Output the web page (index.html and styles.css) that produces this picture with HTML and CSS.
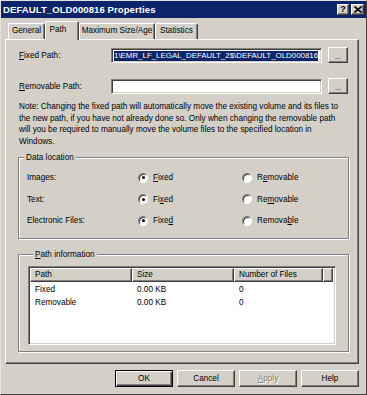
FILE: index.html
```html
<!DOCTYPE html>
<html>
<head>
<meta charset="utf-8">
<title>DEFAULT_OLD000816 Properties</title>
<link rel="stylesheet" href="styles.css">
</head>
<body>
<div class="window">
  <div class="titlebar">
    <span class="title">DEFAULT_OLD000816 Properties</span>
    <div class="tbtns">
      <span class="tbtn help">?</span>
      <span class="tbtn close"><svg width="8" height="7" viewBox="0 0 8 7"><path d="M0.5 0.5 L7.5 6.5 M7.5 0.5 L0.5 6.5" stroke="#000" stroke-width="1.6" fill="none"/></svg></span>
    </div>
  </div>
  <div class="client">
    <div class="tabs">
      <div class="tab t-general">General</div>
      <div class="tab t-path active">Path</div>
      <div class="tab t-max">Maximum Size/Age</div>
      <div class="tab t-stats">Statistics</div>
    </div>
    <div class="panel">
      <div class="pathrow">
        <span class="plabel"><u>F</u>ixed Path:</span>
        <div class="field"><span class="sel">1\EMR_LF_LEGAL_DEFAULT_2$\DEFAULT_OLD000816</span></div>
        <div class="btn dots">...</div>
      </div>
      <div class="pathrow second">
        <span class="plabel"><u>R</u>emovable Path:</span>
        <div class="field"></div>
        <div class="btn dots">...</div>
      </div>
      <p class="note">Note: Changing the fixed path will automatically move the existing volume and its files to<br>the new path, if you have not already done so. Only when changing the removable path<br>will you be required to manually move the volume files to the specified location in<br>Windows.</p>
      <fieldset class="group data">
        <legend>Data location</legend>
        <div class="drow">
          <span class="dlabel">Images:</span>
          <span class="radio"><i class="rb on"></i><span><u>F</u>ixed</span></span>
          <span class="radio"><i class="rb"></i><span>R<u>e</u>movable</span></span>
        </div>
        <div class="drow">
          <span class="dlabel">Text:</span>
          <span class="radio"><i class="rb on"></i><span>Fi<u>x</u>ed</span></span>
          <span class="radio"><i class="rb"></i><span>Re<u>m</u>ovable</span></span>
        </div>
        <div class="drow">
          <span class="dlabel">Electronic Files:</span>
          <span class="radio"><i class="rb on"></i><span>Fixe<u>d</u></span></span>
          <span class="radio"><i class="rb"></i><span>Remova<u>b</u>le</span></span>
        </div>
      </fieldset>
      <fieldset class="group info">
        <legend><u>P</u>ath information</legend>
        <div class="listview">
          <div class="lvhead">
            <span class="hcol c1">Path</span>
            <span class="hcol c2">Size</span>
            <span class="hcol c3">Number of Files</span>
            <span class="hcol c4"></span>
          </div>
          <div class="lvrow"><span class="c1">Fixed</span><span class="c2">0.00 KB</span><span class="c3">0</span></div>
          <div class="lvrow"><span class="c1">Removable</span><span class="c2">0.00 KB</span><span class="c3">0</span></div>
        </div>
      </fieldset>
    </div>
    <div class="buttons">
      <div class="btn push default">OK</div>
      <div class="btn push">Cancel</div>
      <div class="btn push disabled"><u>A</u>pply</div>
      <div class="btn push">Help</div>
    </div>
  </div>
</div>
</body>
</html>
```

FILE: styles.css
```css
* { box-sizing: border-box; }
html, body { margin: 0; padding: 0; }
body {
  width: 367px;
  height: 395px;
  overflow: hidden;
  background: #d4d0c8;
  font-family: "Liberation Sans", Arial, sans-serif;
  font-size: 8.2px;
  color: #000;
}
u { text-decoration: underline; text-underline-offset: 1px; }

.window {
  width: 367px;
  height: 395px;
  display: flex;
  flex-direction: column;
  border: 1px solid;
  border-color: #e4e2dc #404040 #404040 #e4e2dc;
  background: #d4d0c8;
}

.titlebar {
  height: 17px;
  flex: none;
  background: #0c256a;
  color: #fff;
  display: flex;
  align-items: center;
  justify-content: space-between;
  padding: 0 2px 0 2px;
}
.title { font-weight: bold; font-size: 9.5px; letter-spacing: 0.1px; }
.tbtns { display: flex; gap: 2px; }
.tbtn {
  width: 12px;
  height: 11px;
  background: #d4d0c8;
  border: 1px solid;
  border-color: #fff #404040 #404040 #fff;
  box-shadow: inset -1px -1px 0 #808080;
  color: #000;
  display: flex;
  align-items: center;
  justify-content: center;
  font-weight: bold;
  font-size: 9px;
  line-height: 1;
}
.tbtn.close { width: 13px; }

.client {
  flex: 1;
  display: flex;
  flex-direction: column;
  padding: 3px 7px 7px 4px;
}

.tabs {
  height: 18px;
  display: flex;
  align-items: flex-end;
  padding-left: 3px;
  position: relative;
  z-index: 1;
}
.tab {
  height: 16px;
  line-height: 14px;
  text-align: center;
  border: 1px solid;
  border-bottom: none;
  border-color: #fff #404040 transparent #fff;
  box-shadow: inset -1px 0 0 #808080;
  border-radius: 2px 2px 0 0;
}
.t-general { width: 37px; }
.t-path { width: 34px; padding-right: 8px; }
.t-max { width: 76px; }
.t-stats { width: 43px; }
.tab.active {
  height: 19px;
  margin-bottom: -1px;
  line-height: 15px;
  background: #d4d0c8;
}

.panel {
  flex: 1;
  border: 1px solid;
  border-color: #fff #404040 #404040 #fff;
  box-shadow: inset -1px -1px 0 #808080;
  padding: 7px 9px 0 12px;
  display: flex;
  flex-direction: column;
}

.pathrow {
  height: 16px;
  display: flex;
  align-items: center;
}
.pathrow.second { margin-top: 15px; }
.plabel { width: 93px; padding-left: 1px; }
.field {
  width: 211px;
  height: 15px;
  background: #fff;
  border: 1px solid;
  border-color: #808080 #fff #fff #808080;
  box-shadow: inset 1px 1px 0 #404040, inset -1px -1px 0 #d4d0c8;
  padding: 2px 3px 1px 2px;
  overflow: hidden;
  white-space: nowrap;
  display: flex;
}
.sel {
  flex: 1;
  background: #0c256a;
  color: #fff;
  line-height: 10px;
  overflow: hidden;
  font-size: 7.9px;
  letter-spacing: 0;
}
.btn {
  background: #d4d0c8;
  border: 1px solid;
  border-color: #fff #404040 #404040 #fff;
  box-shadow: inset -1px -1px 0 #808080;
  display: flex;
  align-items: center;
  justify-content: center;
}
.dots {
  width: 20px;
  height: 16px;
  margin-left: 6px;
  font-size: 7px;
  padding-top: 3px;
}

.note {
  margin: 7px 0 0 1px;
  line-height: 11.6px;
  white-space: nowrap;
}

.group {
  margin: 0;
  padding: 0;
  min-width: 0;
  border: 1px solid #808080;
  box-shadow: inset 1px 1px 0 #fff, 1px 1px 0 #fff;
  width: 331px;
}
.group legend {
  margin-left: 5px;
  padding: 0 2px;
  line-height: 11px;
  background: #d4d0c8;
}
.group.data {
  margin-top: 5px;
  padding: 8px 0 11px 0;
  display: flex;
  flex-direction: column;
  gap: 8.5px;
}
.drow {
  height: 13px;
  display: flex;
  align-items: center;
}
.dlabel { width: 119px; padding-left: 8px; }
.radio { display: flex; align-items: center; gap: 5px; width: 104px; }
.rb {
  width: 10px;
  height: 10px;
  border-radius: 50%;
  border: 1px solid;
  border-color: #808080 #fff #fff #808080;
  background: #fff;
  box-shadow: inset 1px 1px 0 #404040;
  display: flex;
  align-items: center;
  justify-content: center;
}
.rb.on::after {
  content: "";
  width: 3px;
  height: 3px;
  border-radius: 50%;
  background: #000;
}

.group.info {
  margin-top: 10px;
  padding: 6px 12px 6px 9px;
}
.listview {
  height: 79px;
  background: #fff;
  border: 1px solid;
  border-color: #808080 #fff #fff #808080;
  box-shadow: inset 1px 1px 0 #404040, inset -1px -1px 0 #d4d0c8;
  padding: 2px 2px 2px 2px;
  overflow: hidden;
}
.lvhead {
  display: flex;
  height: 14px;
  margin: -1px 0 1px -1px;
}
.hcol {
  height: 14px;
  background: #d4d0c8;
  border: 1px solid;
  border-color: #fff #404040 #404040 #fff;
  box-shadow: inset -1px -1px 0 #808080;
  padding-left: 4px;
  line-height: 12px;
}
.hcol.c1 { width: 102px; }
.hcol.c2 { width: 102px; }
.hcol.c3 { width: 89px; }
.hcol.c4 { flex: 1; }
.lvrow {
  display: flex;
  height: 13px;
  line-height: 13px;
}
.lvrow span { padding-left: 4px; }
.lvrow .c1 { width: 102px; }
.lvrow .c2 { width: 102px; }
.lvrow .c3 { width: 89px; }

.buttons {
  flex: none;
  display: flex;
  justify-content: flex-end;
  gap: 4px;
  margin-top: 6px;
  padding-right: 0px;
}
.push {
  width: 58px;
  height: 17px;
}
.push.default {
  border-color: #000;
  box-shadow: inset 1px 1px 0 #fff, inset -1px -1px 0 #404040, inset -2px -2px 0 #808080;
}
.push.disabled {
  color: #808080;
  text-shadow: 1px 1px 0 #fff;
}
```
